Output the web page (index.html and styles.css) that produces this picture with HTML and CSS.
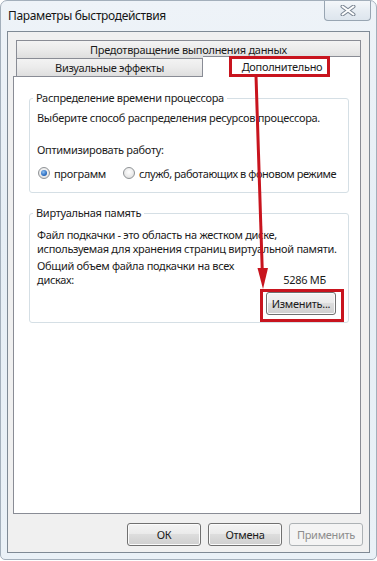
FILE: index.html
```html
<!DOCTYPE html>
<html lang="ru">
<head>
    <meta charset="UTF-8">
    <meta name="viewport" content="width=device-width, initial-scale=1.0">
    <title>Параметры быстродействия</title>
    <link rel="stylesheet" href="styles.css">
</head>
<body>
    <div class="window">
        <div class="titlebar">
            <span class="title">Параметры быстродействия</span>
            <button class="close-btn" title="Закрыть">
                <svg width="16" height="11" viewBox="0 0 16 11">
                    <path d="M2.5 1.5 L13.5 9.5 M13.5 1.5 L2.5 9.5" stroke="#7c8794" stroke-width="4" stroke-linecap="round"/>
                    <path d="M2.5 1.5 L13.5 9.5 M13.5 1.5 L2.5 9.5" stroke="#ffffff" stroke-width="2" stroke-linecap="round"/>
                </svg>
            </button>
        </div>

        <div class="client">
            <div class="tabs">
                <div class="tab-row">
                    <div class="tab tab-wide">Предотвращение выполнения данных</div>
                </div>
                <div class="tab-row">
                    <div class="tab tab-left">Визуальные эффекты</div>
                    <div class="tab tab-active">Дополнительно</div>
                </div>
            </div>

            <div class="panel">
                <fieldset class="group group-cpu">
                    <legend>Распределение времени процессора</legend>
                    <p class="line first">Выберите способ распределения ресурсов процессора.</p>
                    <p class="line optimize">Оптимизировать работу:</p>
                    <div class="radios">
                        <label class="radio-item">
                            <span class="radio checked"><span class="dot"></span></span>
                            программ
                        </label>
                        <label class="radio-item">
                            <span class="radio"></span>
                            <span class="narrow">служб, работающих в фоновом режиме</span>
                        </label>
                    </div>
                </fieldset>

                <fieldset class="group group-vm">
                    <legend>Виртуальная память</legend>
                    <p class="line first">Файл подкачки - это область на жестком диске,<br>используемая для хранения страниц виртуальной памяти.</p>
                    <div class="total">
                        <span class="line">Общий объем файла подкачки на всех<br>дисках:</span>
                        <span class="total-value">5286 МБ</span>
                    </div>
                    <div class="vm-actions">
                        <button class="btn btn-change">Изменить...</button>
                    </div>
                </fieldset>
            </div>

            <div class="buttons">
                <button class="btn btn-dialog">ОК</button>
                <button class="btn btn-dialog">Отмена</button>
                <button class="btn btn-dialog" disabled>Применить</button>
            </div>
        </div>

        <!-- red annotations drawn over the dialog -->
        <div class="mark mark-tab"></div>
        <div class="mark mark-btn"></div>
        <svg class="arrow" width="377" height="561" viewBox="0 0 377 561">
            <line x1="256" y1="76" x2="262.3" y2="272" stroke="#c8141e" stroke-width="3"/>
            <polygon points="257.5,268 268,268 263,289" fill="#c8141e"/>
        </svg>
    </div>
</body>
</html>
```

FILE: styles.css
```css
* {
    margin: 0;
    padding: 0;
    box-sizing: border-box;
}

body {
    font-family: 'Noto Sans', 'Open Sans', sans-serif;
    font-size: 11px;
    letter-spacing: -0.3px;
    color: #1b1b1b;
    background: #ffffff;
    width: 377px;
    height: 561px;
    overflow: hidden;
}

.window {
    position: relative;
    width: 377px;
    height: 560px;
    border: 1px solid #a3afbb;
    border-radius: 7px 7px 5px 5px;
    background: linear-gradient(180deg, #eef3f8 0%, #e6eef5 40%, #eaf1f7 100%);
}

.titlebar {
    height: 30px;
    display: flex;
    justify-content: space-between;
    align-items: flex-start;
}

.title {
    padding: 7px 0 0 7px;
    font-size: 12px;
    letter-spacing: -0.35px;
    line-height: 16px;
    color: #151515;
}

.close-btn {
    width: 47px;
    height: 20px;
    margin-right: 5px;
    border: 1px solid #98a5b2;
    border-top: none;
    border-radius: 0 0 4px 4px;
    background: linear-gradient(180deg, #f4f7fa 0%, #e7edf3 50%, #dde5ed 100%);
    display: flex;
    align-items: center;
    justify-content: center;
}

.client {
    margin: 0 6px;
    height: 522px;
    border: 1px solid #7f8a95;
    background: #f0f0f0;
    padding: 8px 8px 0 5px;
    display: flex;
    flex-direction: column;
}

.tab-row {
    display: flex;
    margin-left: 3px;
    height: 18px;
}

.tab {
    height: 18px;
    border: 1px solid #898c95;
    border-bottom: none;
    background: linear-gradient(180deg, #f3f3f3 0%, #ebebeb 50%, #dedede 100%);
    text-align: center;
    line-height: 17px;
    color: #1b1b1b;
}

.tab-wide {
    flex: 1;
}

.tab-left {
    width: 187px;
}

.tab-active {
    flex: 1;
    position: relative;
    z-index: 1;
    height: 21px;
    margin-top: -2px;
    border-left: none;
    background: #ffffff;
    line-height: 20px;
    padding-left: 1px;
}

.panel {
    height: 438px;
    border: 1px solid #898c95;
    background: #ffffff;
    padding: 14px 11px 0 15px;
}

.group {
    border: 1px solid #d5dfe5;
    border-radius: 3px;
    padding: 0 12px 11px 7px;
    min-inline-size: 0;
}

.group legend {
    margin-left: -4px;
    padding: 0 3px;
    line-height: 14px;
}

.line {
    line-height: 14px;
    white-space: nowrap;
}

.group-cpu .first {
    margin-top: 6px;
}

.optimize {
    margin-top: 18px;
}

.radios {
    display: flex;
    align-items: center;
    gap: 17px;
    margin-top: 8px;
    height: 16px;
    padding-left: 1px;
    white-space: nowrap;
}

.radio-item {
    display: flex;
    align-items: center;
    gap: 4px;
}

.narrow {
    letter-spacing: -0.45px;
}

.radio {
    width: 12px;
    height: 12px;
    flex: none;
    border-radius: 50%;
    border: 1px solid #8f9396;
    background: radial-gradient(circle at 50% 40%, #ffffff 0%, #e9e9e9 60%, #d4d4d4 100%);
    display: flex;
    align-items: center;
    justify-content: center;
}

.radio .dot {
    width: 6px;
    height: 6px;
    border-radius: 50%;
    background: radial-gradient(circle at 40% 35%, #8fc1f2 0%, #2d6fc2 60%, #1a4f9a 100%);
}

.group-vm {
    margin-top: 13px;
    padding-bottom: 7px;
}

.group-vm .first {
    margin-top: 8px;
}

.total {
    display: flex;
    justify-content: space-between;
    align-items: flex-end;
    margin-top: 3px;
}

.total-value {
    line-height: 14px;
    margin-right: 10px;
}

.vm-actions {
    display: flex;
    justify-content: flex-end;
    margin-top: 5px;
}

.btn {
    font-family: inherit;
    font-size: 11px;
    letter-spacing: -0.3px;
    color: #1b1b1b;
    height: 23px;
    border: 1px solid #707070;
    border-radius: 3px;
    background: linear-gradient(180deg, #f3f3f3 0%, #ebebeb 45%, #dddddd 50%, #cfcfcf 100%);
    box-shadow: inset 0 0 0 1px #fbfbfb;
}

.btn-change {
    width: 70px;
}

.buttons {
    display: flex;
    justify-content: flex-end;
    gap: 7px;
    margin: 9px -2px 0 0;
}

.btn-dialog {
    width: 74px;
}

.btn-dialog:disabled {
    color: #8d8d8d;
    border-color: #adb2b5;
    background: #f4f4f4;
    box-shadow: none;
}

.mark {
    position: absolute;
    z-index: 2;
    border: 3px solid #c8141e;
}

.mark-tab {
    left: 228px;
    top: 55px;
    width: 101px;
    height: 21px;
}

.mark-btn {
    left: 259px;
    top: 288px;
    width: 84px;
    height: 33px;
}

.arrow {
    position: absolute;
    z-index: 2;
    left: -1px;
    top: -1px;
    pointer-events: none;
}
```
